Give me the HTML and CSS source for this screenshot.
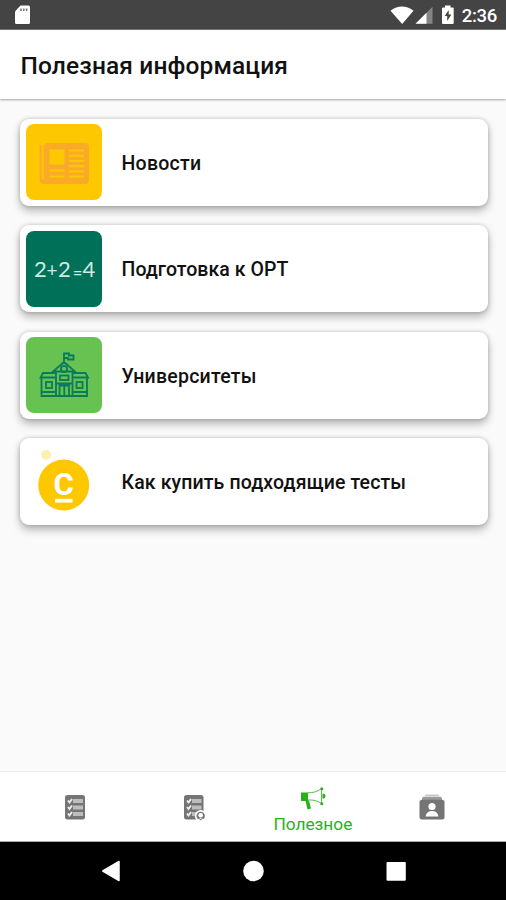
FILE: index.html
```html
<!DOCTYPE html>
<html lang="ru">
<head>
<meta charset="utf-8">
<title>Полезная информация</title>
<link rel="stylesheet" href="styles.css">
</head>
<body>
<div class="screen">
  <div class="status">
    <svg class="sd" width="18" height="22" viewBox="0 0 18 22"><path d="M6.500 1.500H14.500Q16 1.500 16 3V18.500Q16 20 14.500 20H2.500Q1 20 1 18.500V7.500Z" fill="#fff"/><path d="M7 4.500v2.500M9.800 4.500v2.500M12.600 4.500v2.500" stroke="#777" stroke-width="1.500"/></svg>
    <div class="system">
      <svg width="64" height="22" viewBox="390 4 64 22"><path d="M390.500 10.700Q402 2.500 413.500 10.700L402.200 24Z" fill="#fff"/><path d="M432.500 6.800V23.800H415.500Z" fill="#858585"/><path d="M426.500 12.800V23.800H415.500Z" fill="#fff"/><path d="M445 5.500h5.500v2h2.200q1 0 1 1V23q0 1-1 1h-9.700q-1 0-1-1V8.500q0-1 1-1h2z" fill="#fff"/><path d="M448.700 10l-4 6h2.500v5l4.200-6.500h-2.700z" fill="#444"/></svg>
      <span class="time">2:36</span>
    </div>
  </div>
  <header><h1>Полезная информация</h1></header>
  <main>
    <a class="card">
      <svg class="tile" viewBox="0 0 76 76"><rect width="76" height="76" rx="8" fill="#fec800"/><path d="M21 19H59Q63 19 63 23V56Q63 60 59 60H18Q13.500 60 13.500 56V21H19Q19 19 21 19" fill="#f9ab28"/><path d="M16.700 20V55" stroke="#fec800" stroke-width="1.900"/><rect x="23.500" y="25.500" width="15" height="15" rx="1" fill="#fec800"/><path d="M43 26.500H58M43 31.800H58M43 37H58M43 42.200H58M43 47.400H58M43 52.500H58M23.500 46.500H38.500M23.500 52.500H38.500" stroke="#fec800" stroke-width="2.200"/></svg>
      <span>Новости</span>
    </a>
    <a class="card">
      <svg class="tile" viewBox="0 0 76 76"><rect width="76" height="76" rx="8" fill="#007158"/><text class="chalk"><tspan x="8" y="45.500">2</tspan><tspan x="20.500" y="45.500" class="sign">+</tspan><tspan x="32" y="46">2</tspan><tspan x="47" y="46.500" class="equals">=</tspan><tspan x="56.500" y="46">4</tspan></text></svg>
      <span class="exam">Подготовка к ОРТ</span>
    </a>
    <a class="card">
      <svg class="tile" viewBox="0 0 76 76"><rect width="76" height="76" rx="8" fill="#68c251"/><g fill="none" stroke="#087b5e" stroke-width="1.800"><path d="M38 26V15.500M38 16.500H43V18.500H47.500V22.500H42V21H38M38 25L49 34.500H27ZM30 35V59M46.500 35V59M30 40.500H14.500L17 36H30M46.500 40.500H62L59.500 36H46.500M15.500 40.500V59H61V40.500M14.500 55H30M46.500 55H62"/><circle cx="38" cy="32" r="3.100"/><rect x="20" y="45" width="6" height="6"/><rect x="50.500" y="45" width="6" height="6"/><rect x="34" y="38.500" width="8.500" height="4.500"/><path d="M30 46.500H46.500M33.500 59V48.500H43V59M38.300 48.500V59"/></g></svg>
      <span class="universities">Университеты</span>
    </a>
    <a class="card">
      <svg class="tile" viewBox="0 0 76 76"><circle cx="20.200" cy="11" r="5" fill="#fef0b0"/><circle cx="37.700" cy="41" r="25.500" fill="#fec800"/><text x="37.700" y="50.500" class="som">С</text><path d="M29 56.700H46.500" stroke="#fff" stroke-width="3.800"/></svg>
      <span class="tests">Как купить подходящие тесты</span>
    </a>
  </main>
  <nav class="tabs">
    <div class="tab">
      <svg width="24" height="30" viewBox="0 0 24 30"><rect x="2" y="3" width="20" height="24.500" rx="2.500" fill="#757575"/><path d="M10 9H20M10 15.500H20M10 22H20" stroke="#bdbdbd" stroke-width="4"/><path d="M5 8.500L6.500 10.500L9 7M5 15L6.500 17L9 13.500M5 21.500L6.500 23.500L9 20" fill="none" stroke="#eee" stroke-width="1.900"/></svg>
    </div>
    <div class="tab">
      <svg width="24" height="30" viewBox="0 0 24 30"><rect x="2" y="3" width="19.500" height="24.500" rx="2.500" fill="#757575"/><path d="M10 9H19.500M10 15.500H19.500M10 22H17" stroke="#bdbdbd" stroke-width="3.800"/><path d="M5 8.500L6.500 10.500L9 7M5 15L6.500 17L9 13.500M5 21.500L6.500 23.500L9 20" fill="none" stroke="#eee" stroke-width="1.900"/><circle cx="18.700" cy="24" r="5.900" fill="#fff"/><circle cx="18.700" cy="24" r="4.200" fill="#777"/><circle cx="18.700" cy="23.300" r="2.300" fill="#fff"/><path d="M15.500 27.800Q18.700 25.500 22 27.800" fill="none" stroke="#fff"/></svg>
    </div>
    <div class="tab active">
      <svg width="28" height="25" viewBox="0 0 28 25"><path d="M2 6.500H9V14.500H10L12 22.500L8.500 23.500L6.500 15H2Z" fill="#29b01b"/><path d="M9 6.800Q17 7 22.500 2.500V17.500Q17 13.500 9 14" fill="none" stroke="#29b01b" stroke-opacity=".8"/><circle cx="22.800" cy="2.700" r="1.500" fill="#29b01b"/><circle cx="22.800" cy="17.700" r="1.500" fill="#29b01b"/><path d="M23.500 7.500Q26.500 7.500 26.500 10T23.500 12.700Z" fill="#29b01b"/></svg>
      <span>Полезное</span>
    </div>
    <div class="tab">
      <svg width="28" height="30" viewBox="0 0 28 30"><path d="M7 3.500Q7 2.500 8 2.500H20Q21 2.500 21 3.500V4.300H7Z" fill="#c7c7c7"/><path d="M4 6.500Q4 4.800 6 4.800H22Q24 4.800 24 6.500V8H4Z" fill="#999"/><rect x="1.500" y="7.800" width="25" height="19.700" rx="2.500" fill="#757575"/><circle cx="14" cy="14.500" r="3.600" fill="#fff"/><path d="M7.500 24.500Q8.500 19 14 19T20.500 24.500Z" fill="#fff"/></svg>
    </div>
  </nav>
  <footer>
    <svg width="506" height="58" viewBox="0 842 506 58"><path d="M119 861.500V880.500L102.800 871Z" fill="#fff" stroke="#fff" stroke-width="1.500" stroke-linejoin="round"/><circle cx="253.500" cy="871" r="10.300" fill="#fff"/><rect x="386.500" y="862" width="19.300" height="18.800" rx="1" fill="#fff"/></svg>
  </footer>
</div>
</body>
</html>
```
FILE: styles.css
```css
* { box-sizing: border-box; }
body { margin: 0; font-family: Roboto, "Noto Sans", sans-serif; color: #111; }
.screen { width: 506px; height: 900px; display: flex; flex-direction: column; background: #fafafa; overflow: hidden; }
.status { flex: none; height: 30px; padding: 4px 9px 0 14px; display: flex; justify-content: space-between; align-items: flex-start; background: #444; border-bottom: 1px solid #777; }
.system { display: flex; align-items: flex-start; gap: 8px; }
.system svg, .sd { display: block; }
.time { font-size: 18.500px; line-height: 24px; font-weight: 500; color: #fff; letter-spacing: -.3px; }
header { flex: none; height: 69px; padding-left: 20.500px; display: flex; align-items: center; background: #fff; box-shadow: 0 1px 2px rgba(0, 0, 0, .35); }
h1 { margin: 0; font-size: 24.500px; line-height: 30px; font-weight: 500; letter-spacing: .13px; padding-top: 2px; white-space: nowrap; }
main { flex: 1; padding: 19.500px 18px 0 20px; display: flex; flex-direction: column; gap: 19.500px; }
.card { flex: none; height: 87px; padding: 0 5.500px; display: flex; align-items: center; gap: 20px; background: #fff; border-radius: 9px; box-shadow: 0 5px 9px rgba(0, 0, 0, .27), 0 0 4px rgba(0, 0, 0, .2); font-size: 19.500px; font-weight: 500; letter-spacing: .25px; white-space: nowrap; }
.card span { padding-top: 2px; }
.exam { letter-spacing: .05px; }
.tests { letter-spacing: .12px; }
.tile { display: block; flex: none; width: 76px; height: 76px; }
.chalk { font: 400 22px Lato, sans-serif; fill: #d0eae3; letter-spacing: 0; }
.chalk .sign { font-size: 19px; }
.chalk .equals { font-size: 16px; font-weight: 700; }
.som { font: 700 31px Roboto, sans-serif; text-anchor: middle; fill: #fff; letter-spacing: 0; }
.tabs { flex: none; height: 71px; padding: 0 15px 0 16px; display: grid; grid-template-columns: repeat(4, 1fr); background: #fff; border-top: 1px solid #eee; border-bottom: 1px solid #aaa; }
.tab { display: flex; flex-direction: column; align-items: center; justify-content: center; }
.tab svg { display: block; }
.active { color: #29b01b; font-size: 17.300px; line-height: 21px; letter-spacing: 0; justify-content: flex-start; padding-top: 13.500px; }
.active span { padding-top: 3px; }
footer { flex: none; height: 58px; background: #000; }
footer svg { display: block; }
```
